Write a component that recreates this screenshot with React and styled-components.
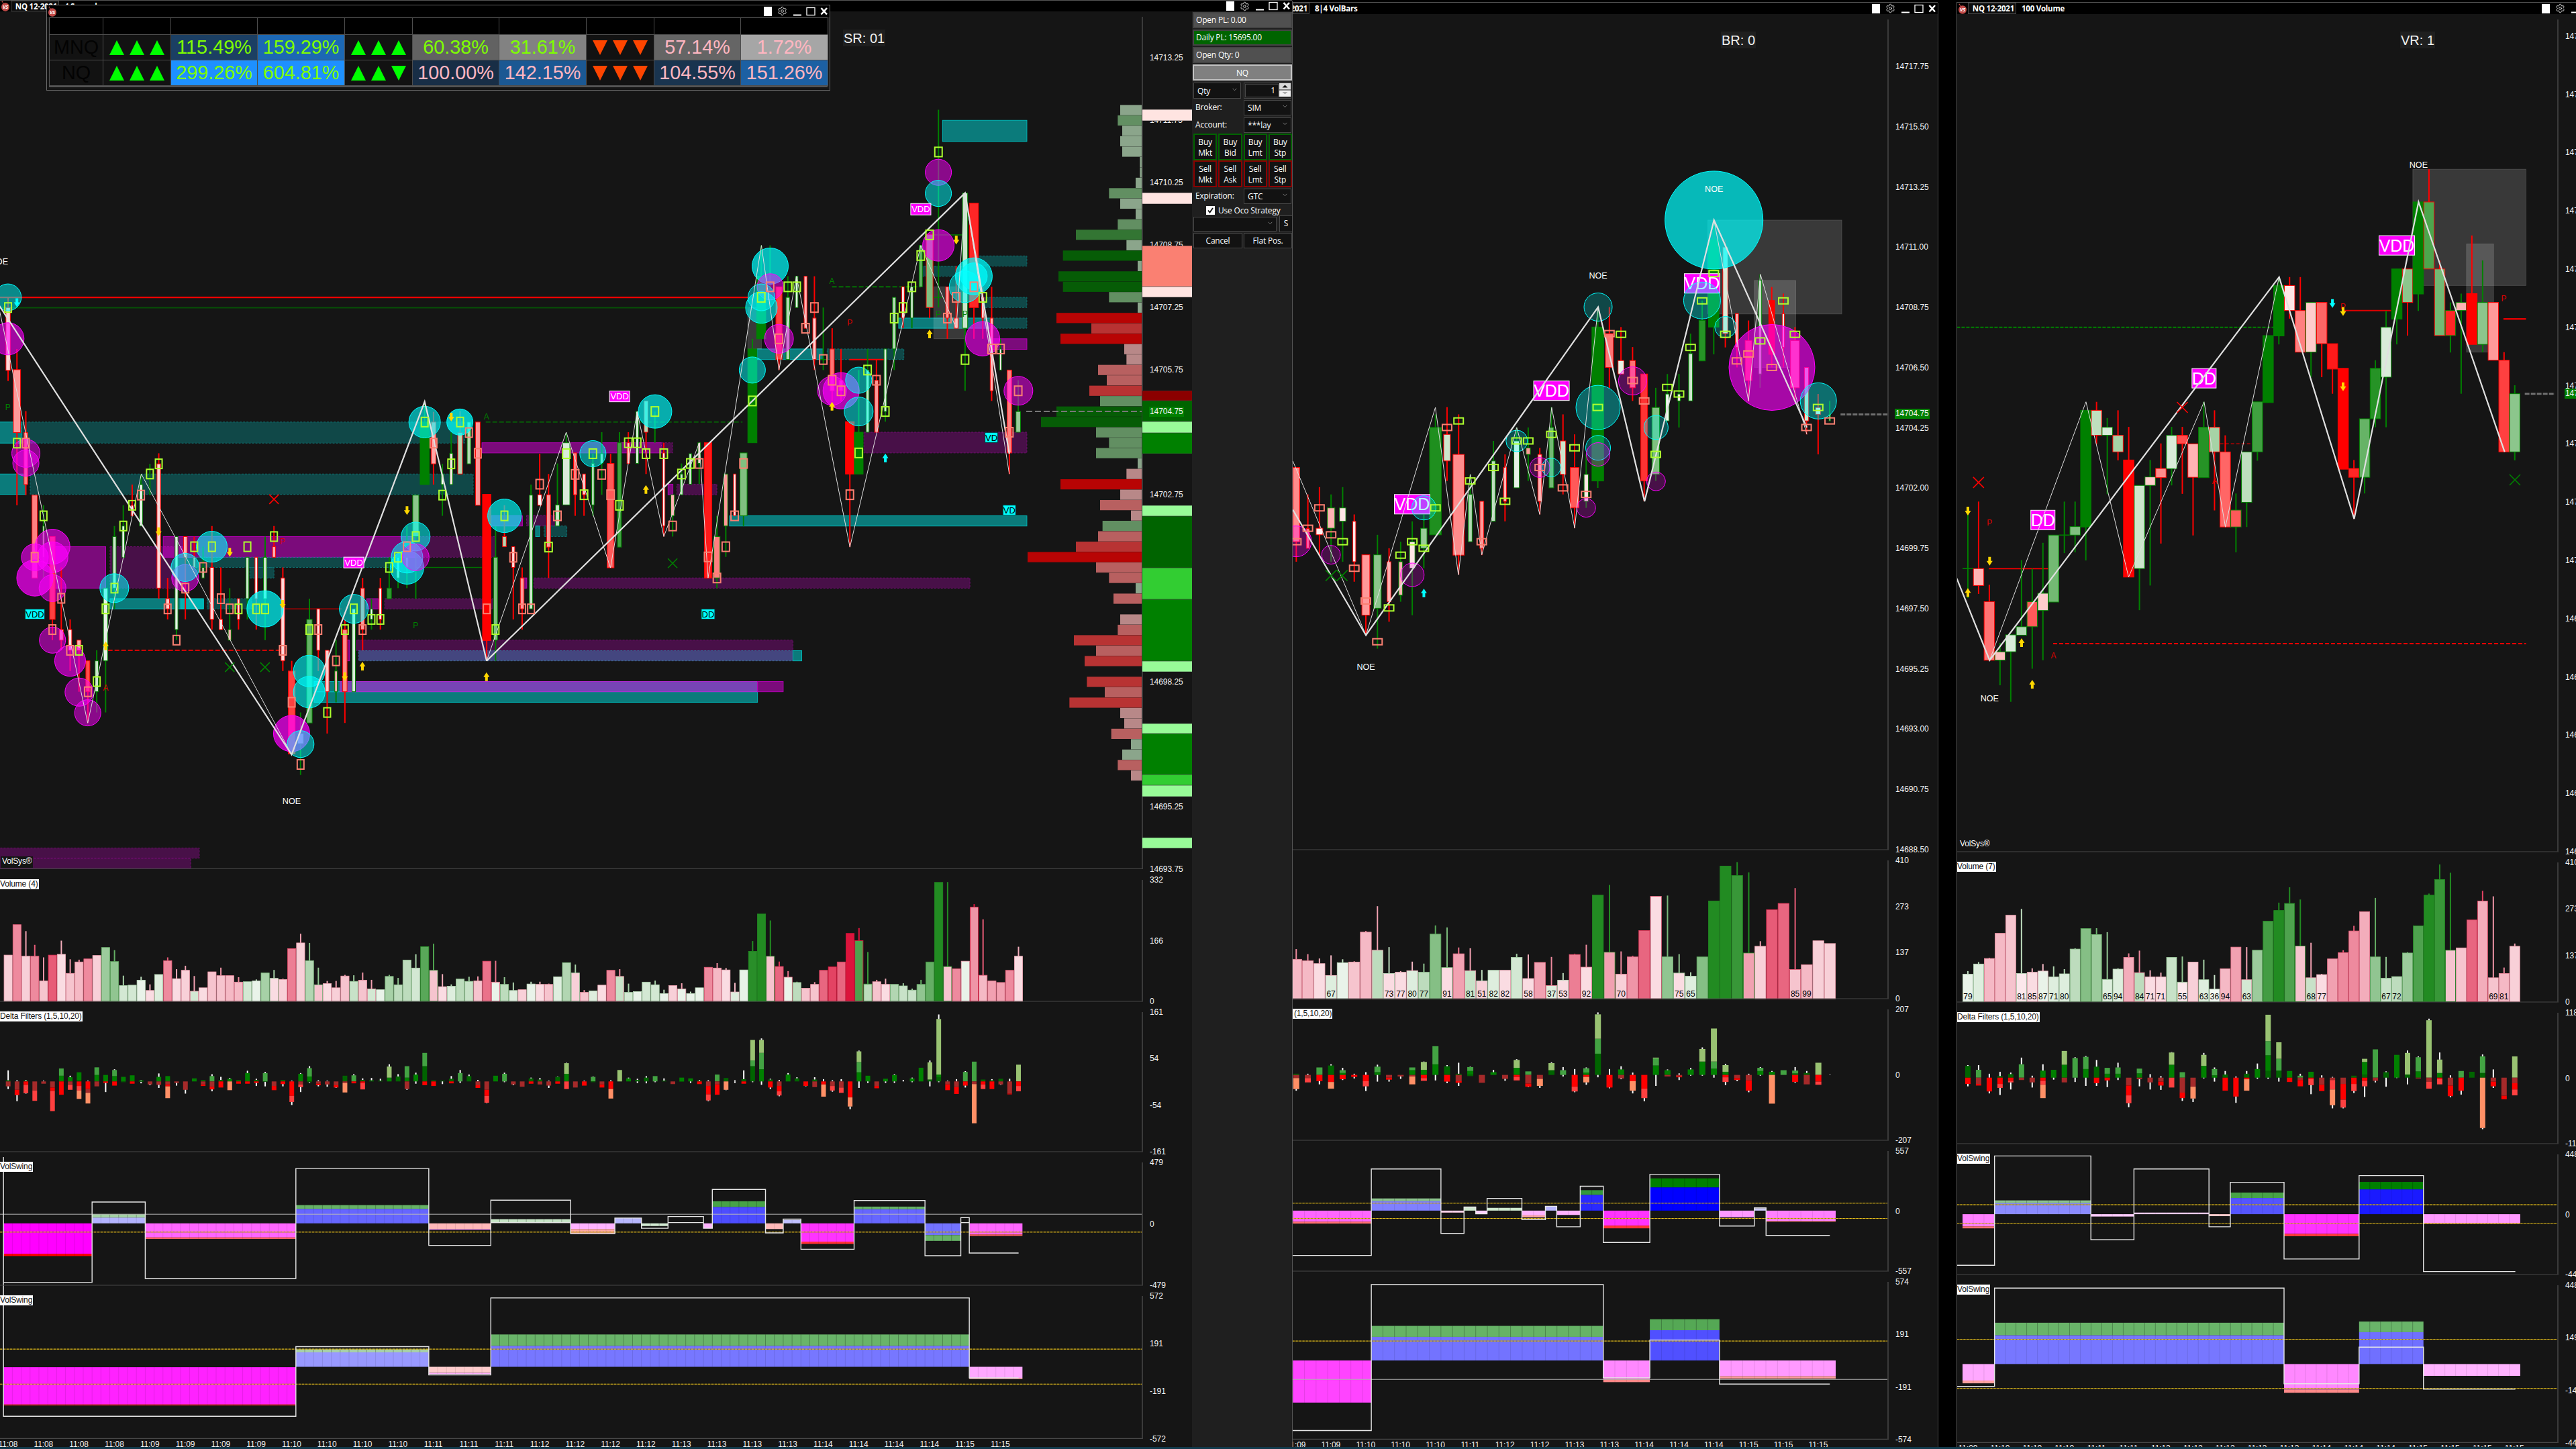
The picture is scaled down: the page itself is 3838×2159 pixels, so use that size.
import React from 'react';
import styled, { createGlobalStyle } from 'styled-components';
import { Settings } from 'lucide-react';

const GlobalStyle = createGlobalStyle`
  * { box-sizing: border-box; }
  body {
    margin: 0;
    background: #000;
    overflow: hidden;
    font-family: 'Liberation Sans', Arial, sans-serif;
  }
  svg { display: block; }
`;

/* ---------- helpers ---------- */

const HUES = { g: [0, 128, 0], r: [255, 0, 0], f: [34, 139, 34], c: [220, 20, 60] };

// "g7" = green, 70% of the way to white
const tone = (code, shift = 0) => {
  const base = HUES[code[0]];
  const t = Math.max(0, Math.min(10, parseFloat(code.slice(1)) - shift)) / 10;
  return `rgb(${base.map((v) => Math.round(v + (255 - v) * t)).join(',')})`;
};

const frame = (ox, oy, kx, ky) => ({
  kx,
  ky,
  x: (v) => ox + v / kx,
  y: (v) => oy + v / ky,
});

const rows = (text) =>
  text
    .trim()
    .split('\n')
    .map((l) => l.trim().split(' '));

const MARK = { g: '#adff2f', s: '#fa8072' };

/* ---------- price drawing ---------- */

const BAND = {
  t: { fill: 'rgba(0,255,255,.44)', stroke: '#00b4b4' },
  T: { fill: '#00b4b4', stroke: '#00e0e0' },
  td: { fill: 'rgba(0,255,255,.22)', stroke: '#0d7070', dash: '3 2' },
  p: { fill: 'rgba(255,0,255,.44)', stroke: '#b400b4' },
  pd: { fill: 'rgba(255,0,255,.22)', stroke: '#700d70', dash: '3 2' },
  b: { fill: '#44467f', stroke: '#3a6a94', dash: '3 2' },
  v: { fill: '#7744b4', stroke: '#b42bd8' },
  w: { fill: 'rgba(255,255,255,.155)', stroke: 'rgba(255,255,255,.14)' },
};

const Bands = ({ at, items }) =>
  items.map(([x1, y1, x2, y2, kind], i) => (
    <rect
      key={i}
      x={at.x(x1)}
      y={at.y(y1)}
      width={(x2 - x1) / at.kx}
      height={(y2 - y1) / at.ky}
      fill={BAND[kind].fill}
      stroke={BAND[kind].stroke}
      strokeDasharray={BAND[kind].dash}
    />
  ));

const Lines = ({ at, items }) =>
  items.map(([x1, x2, y, color, w, dash], i) => (
    <line
      key={i}
      x1={at.x(x1)}
      x2={at.x(x2)}
      y1={at.y(y)}
      y2={at.y(y)}
      stroke={color}
      strokeWidth={w || 1.5}
      strokeDasharray={dash}
    />
  ));

const Candles = ({ at, data, first, step }) =>
  data.map(([hi, top, bot, lo, w, wick, fill], i) => {
    const x = at.x(first + step * i);
    const color = wick === 'g' ? '#008000' : '#ff0000';
    return (
      <g key={i}>
        <line x1={x} x2={x} y1={at.y(+hi)} y2={at.y(+lo)} stroke={color} strokeWidth="2" />
        {+w > 0 && (
          <rect
            x={x - w / at.kx / 2 + 0.5}
            y={at.y(+top)}
            width={w / at.kx - 1}
            height={(bot - top) / at.ky}
            fill={tone(fill)}
            stroke={color}
          />
        )}
      </g>
    );
  });

const Marks = ({ at, data, first, step, w, h }) =>
  data.map((d, i) =>
    d[7] ? (
      <rect
        key={i}
        x={at.x(first + step * i) - w / 2}
        y={at.y(+d[7].slice(1)) - h / 2}
        width={w}
        height={h}
        fill="none"
        stroke={MARK[d[7][0]]}
        strokeWidth="2"
      />
    ) : null
  );

const Circles = ({ at, items }) =>
  items.map(([kind, x, y, r, o], i) => {
    const color = kind === 'c' ? '#00ffff' : '#ff00ff';
    return (
      <circle key={i} cx={at.x(x)} cy={at.y(y)} r={r} fill={color} fillOpacity={o} stroke={color} />
    );
  });

const Zigzag = ({ at, points, w }) => (
  <polyline
    points={points.map(([x, y]) => `${at.x(x)},${at.y(y)}`).join(' ')}
    fill="none"
    stroke="#e0e0e0"
    strokeWidth={w}
  />
);

const ARROW = {
  d: 'M-2 -6.5h4v6h2.5L0 6.5L-4.5 -.5h2.5z',
  u: 'M-2 6.5h4v-6h2.5L0 -6.5L-4.5 .5h2.5z',
};

const Arrows = ({ at, items }) =>
  items.map(([dir, x, y, color], i) => (
    <path
      key={i}
      d={ARROW[dir]}
      fill={color || '#ffd700'}
      transform={`translate(${at.x(x)} ${at.y(y)})`}
    />
  ));

const Crosses = ({ at, items }) =>
  items.map(([x, y, color, r = 7], i) => (
    <path
      key={i}
      d={`M${-r} ${-r}L${r} ${r}M${r} ${-r}L${-r} ${r}`}
      stroke={color}
      strokeWidth="1.6"
      transform={`translate(${at.x(x)} ${at.y(y)})`}
    />
  ));

const Words = ({ at, items }) =>
  items.map(([text, x, y, color, size = 12], i) => (
    <text
      key={i}
      x={at.x(x)}
      y={at.y(y) + size * 0.36}
      fontSize={size}
      fill={color}
      textAnchor="middle"
    >
      {text}
    </text>
  ));

const Tags = ({ at, items }) =>
  items.map(([text, x, y, w, h, size, alt], i) => (
    <g key={i}>
      <rect
        x={at.x(x) - w / 2}
        y={at.y(y) - h / 2}
        width={w}
        height={h}
        fill={alt ? '#00ffff' : '#ff00ff'}
        stroke={alt ? '#003c3c' : '#fff'}
      />
      <text
        x={at.x(x)}
        y={at.y(y) + size * 0.36}
        fontSize={size}
        fill={alt ? '#000' : '#fff'}
        textAnchor="middle"
      >
        {text}
      </text>
    </g>
  ));

/* ---------- indicator drawing ---------- */

// row: top wickTop fill [label] [wick tone]
const Volume = ({ at, data, first, step, base }) =>
  data.map(([top, wick, fill, label, wickFill], i) => {
    const x = at.x(first + step * i);
    const w = step / at.kx - 1;
    const edge = wickFill ? tone(wickFill) : tone(fill, 2);
    return (
      <g key={i}>
        {+wick > 0 && (
          <line x1={x} x2={x} y1={at.y(+wick)} y2={at.y(+top)} stroke={edge} strokeWidth="2" />
        )}
        <rect
          x={x - w / 2}
          y={at.y(+top)}
          width={w}
          height={(base - top) / at.ky}
          fill={tone(fill)}
          stroke={edge}
          strokeWidth=".8"
        />
        {label && label !== '-' && (
          <text x={x} y={at.y(base) - 4} fontSize="12" textAnchor="middle" fill="#000">
            {label}
          </text>
        )}
      </g>
    );
  });

const DELTA = {
  D: '#006400',
  G: '#008000',
  M: '#43a343',
  L: '#99c272',
  B: '#a52a2a',
  R: '#ff0000',
  T: '#ff4040',
  S: '#ff9066',
  W: '#ffffff',
};

// "G18M20W2/R12" : pieces stacked outward from zero, up part before the slash
const Delta = ({ at, series, first, step, zero, width }) =>
  series
    .trim()
    .split(/\s+/)
    .map((bar, i) => {
      const x = at.x(first + step * i);
      return (
        <g key={i}>
          {bar.split('/').map((side, s) => {
            let v = 0;
            return (side.match(/[A-Z][\d.]+/g) || []).map((piece, k) => {
              const h = parseFloat(piece.slice(1));
              const from = v;
              v += h;
              const w = piece[0] === 'W' ? 2 : width;
              return (
                <rect
                  key={k}
                  x={x - w / 2}
                  y={at.y(s ? zero + from : zero - v)}
                  width={w}
                  height={h / at.ky}
                  fill={DELTA[piece[0]]}
                />
              );
            });
          })}
        </g>
      );
    });

const isGreen = (hex) => parseInt(hex.slice(3, 5), 16) > parseInt(hex.slice(5, 7), 16) + 20;

const Swing = ({ at, bars, outline, levels, right, step, first }) => (
  <>
    {bars.map(([x1, x2, y1, y2, fill], i) => {
      const cuts = [];
      for (let x = x1 + step; x < x2 - 4; x += step) cuts.push(x);
      return (
        <g key={i}>
          <rect
            x={at.x(x1)}
            y={at.y(y1)}
            width={(x2 - x1) / at.kx}
            height={(y2 - y1) / at.ky}
            fill={fill}
          />
          {cuts.map((x) => (
            <line
              key={x}
              x1={at.x(x)}
              x2={at.x(x)}
              y1={at.y(y1)}
              y2={at.y(y2)}
              stroke="#000"
              strokeOpacity={isGreen(fill) ? 0.26 : 0.1}
            />
          ))}
        </g>
      );
    })}
    {levels.map(([y, color]) => (
      <g key={y}>
        <line x1={at.x(first)} x2={right} y1={at.y(y)} y2={at.y(y)} stroke={color || '#8a7410'} />
        {!color && (
          <line
            x1={at.x(first)}
            x2={right}
            y1={at.y(y)}
            y2={at.y(y)}
            stroke="#e8c020"
            strokeDasharray="3 2"
          />
        )}
      </g>
    ))}
    {outline.map((line, i) => (
      <polyline
        key={i}
        points={rows(line)[0]
          .map((p) => p.split(','))
          .map(([x, y]) => `${at.x(+x)},${at.y(+y)}`)
          .join(' ')}
        fill="none"
        stroke="#e6e6e6"
        strokeWidth="1.4"
      />
    ))}
  </>
);

/* ---------- window parts ---------- */

const Workspace = styled.div`
  position: relative;
  width: 3838px;
  height: 2159px;
  background: #000;
  overflow: hidden;
  display: flex;
  align-items: flex-start;
`;

const Window = styled.section`
  width: ${(p) => p.$width}px;
  margin-top: ${(p) => p.$top}px;
  margin-right: ${(p) => p.$gap || 0}px;
  height: ${(p) => 2159 - p.$top}px;
  flex: none;
  background: #151515;
  border-right: 1px solid #4a4a4a;
  display: flex;
  flex-direction: column;
  overflow: hidden;
  box-shadow: -1px -1px 0 #555;
`;

const Bar = styled.header`
  height: ${(p) => p.$height}px;
  flex: none;
  background: #000;
  display: flex;
  align-items: center;
  color: #fff;
  font: bold 11.5px 'Open Sans', 'Noto Sans', sans-serif;
  letter-spacing: -0.25px;
  white-space: nowrap;
`;

const Instrument = styled.span`
  height: 100%;
  width: ${(p) => p.$width || 72}px;
  margin-right: 8px;
  padding: 0 2px;
  border: 1px solid #4a4a4a;
  background: #0c0c0c;
  display: flex;
  align-items: center;
  justify-content: flex-end;
  overflow: hidden;
  flex: none;
`;

const WindowButtons = styled.div`
  margin-left: auto;
  padding-right: 1px;
  display: flex;
  align-items: center;
  flex: none;
`;

const Swatch = styled.i`
  width: 12px;
  height: 14px;
  margin-right: 8px;
  background: #fff;
`;

const Logo = () => (
  <svg width="16" height="16" viewBox="0 0 16 16">
    <path d="M3 1l2 3" stroke="#c9504c" strokeWidth="1.6" strokeDasharray="1.5 1" />
    <ellipse cx="8" cy="9.5" rx="6" ry="6.2" fill="#c24a48" />
    <text x="8" y="12.4" fontSize="7.5" fontStyle="italic" fontWeight="bold" fill="#fff" textAnchor="middle">
      VS
    </text>
  </svg>
);

const Buttons = () => (
  <WindowButtons>
    <Swatch />
    <Settings size={15} color="#ddd" strokeWidth={1.6} />
    <svg width="62" height="16" viewBox="0 0 62 16">
      <path d="M9 13.5h12" stroke="#fff" strokeWidth="2" />
      <rect x="29" y="2.5" width="12" height="11" fill="none" stroke="#fff" strokeWidth="1.3" />
      <path d="M50.5 3l8.500 9.500M59 3l-8.500 9.500" stroke="#fff" strokeWidth="2.6" />
    </svg>
  </WindowButtons>
);

const Body = styled.div`
  flex: 1;
  min-height: 0;
  display: flex;
`;

const Chart = styled.div`
  flex: 1;
  min-width: 0;
  display: flex;
  flex-direction: column;
`;

const PaneRow = styled.div`
  position: relative;
  height: ${(p) => p.$height}px;
  flex: none;
  display: flex;
`;

const Scale = styled.div`
  position: relative;
  flex: 1;
  margin-bottom: ${(p) => (p.$last ? -8 : 0)}px;
  padding-left: 10px;
  display: flex;
  flex-direction: column;
  justify-content: space-between;
  color: #f4f4f4;
  font-size: 12px;
  line-height: 16px;
  white-space: nowrap;
  letter-spacing: -0.05px;
`;

const PriceScale = styled(Scale)`
  justify-content: flex-start;
  padding: 0;
`;

const Price = styled.div`
  height: ${(p) => p.$step}px;
  margin-top: ${(p) => p.$offset || 0}px;
  padding-left: 10px;
  flex: none;
  display: flex;
  align-items: center;
`;

const PriceBlock = styled.div`
  position: absolute;
  left: -1px;
  right: 0;
  top: ${(p) => p.$top}px;
  height: ${(p) => p.$height}px;
  background: ${(p) => p.$color};
  border: 1px solid rgba(60, 60, 60, 0.35);
  border-width: 1px 0;
`;

const LastPrice = styled.div`
  position: absolute;
  left: 9px;
  top: ${(p) => p.$top}px;
  padding: 0 1px;
  line-height: 15px;
  background: #008000;
`;

const PaneName = styled.div`
  position: absolute;
  left: 0;
  top: 7px;
  height: 15px;
  padding: 0 1px ${(p) => (p.$indent ? '0 2px' : '0 0')};
  background: #fff;
  color: #111;
  font-size: 12px;
  line-height: 15px;
  letter-spacing: -0.15px;
  white-space: nowrap;
`;

const Brand = styled(PaneName)`
  left: ${(p) => p.$left}px;
  top: auto;
  bottom: 10px;
  height: 17px;
  padding: 0 2px;
  background: #151515;
  color: #fff;
`;

const Ratio = styled.div`
  position: absolute;
  left: ${(p) => p.$left}px;
  top: ${(p) => p.$top}px;
  height: 25px;
  padding: 0 1px;
  background: #1f1f1f;
  color: #f0f0f0;
  font-size: 20px;
  line-height: 26px;
  white-space: nowrap;
`;

const TimeAxis = styled.div`
  height: 15px;
  flex: none;
  margin-left: ${(p) => p.$start}px;
  display: flex;
  color: #f4f4f4;
  font-size: 12px;
  line-height: 16px;
  letter-spacing: -0.1px;
`;

const Tick = styled.span`
  width: ${(p) => p.$step}px;
  flex: none;
  text-align: center;
`;

const Times = ({ start, step, labels }) => (
  <TimeAxis $start={start - step / 2}>
    {labels.split(' ').map((t, i) => (
      <Tick key={i} $step={step}>{`11:${t}`}</Tick>
    ))}
  </TimeAxis>
);

const Plot = ({ x, y, w, h, sep, axisTop, children }) => (
  <svg width={w} height={h} viewBox={`${x} ${y} ${w} ${h}`} style={{ flex: 'none' }}>
    {children}
    <line x1={x} x2={x + w} y1={sep} y2={sep} stroke="#484848" strokeWidth="1.2" />
    <line x1={x + w - 1} x2={x + w - 1} y1={axisTop} y2={sep} stroke="#3a3a3a" strokeWidth="2" />
  </svg>
);

const IndicatorPane = ({ x, w, top, bottom, last, name, indent, scale, children }) => (
  <PaneRow $height={bottom - top}>
    <Plot x={x} y={top} w={w} h={bottom - top} sep={last ? bottom - 0.6 : bottom - 8} axisTop={top + 8}>
      {children}
    </Plot>
    <Scale $last={last}>
      {scale.map((s) => (
        <span key={s}>{s}</span>
      ))}
    </Scale>
    {name && <PaneName $indent={indent}>{name}</PaneName>}
  </PaneRow>
);

const priceList = (from, delta, count) =>
  Array.from({ length: count }, (_, i) => (from - delta * i).toFixed(2));

/* ---------- trend table ---------- */

const TableWindow = styled.div`
  position: absolute;
  left: 69px;
  top: 7px;
  width: 1168px;
  height: 128px;
  padding: 0 3px 0 3px;
  background: #151515;
  border: 1px solid #6a6a6a;
`;

const TableBar = styled(Bar)`
  margin: 0 -3px 1px;
`;

const TableGrid = styled.div`
  display: grid;
  grid-template-columns: 80px 101px 129px 130px 101px 129px 130px 101px 129px 130px;
  grid-template-rows: 25px 38px 38px;
  border: 1px solid #555;
  border-width: 1px 0 2px 1px;
`;

const TableCell = styled.div`
  border: 1px solid #4d4d4d;
  border-width: 0 1px 1px 0;
  background: ${(p) => p.$bg || '#121212'};
  color: ${(p) => p.$color || '#030303'};
  font-size: 28.8px;
  line-height: 1;
  display: flex;
  gap: 8px;
  align-items: center;
  justify-content: center;
`;

const Triangles = ({ dirs, color }) =>
  dirs.split('').map((d, i) => (
    <svg key={i} width="22" height="22" viewBox="0 0 22 22">
      <path d={d === 'u' ? 'M11 0L22 22H0z' : 'M11 22L22 0H0z'} fill={color} />
    </svg>
  ));

const LIME = '#7fff00';
const PINK = '#ffb6c1';

const TREND = [
  ['MNQ', 'uuu', ['115.49%', '#1b3f63'], ['159.29%', '#1c68b4'], 'uuu', ['60.38%', '#626262'], ['31.61%', '#828282'], 'ddd', ['57.14%', '#656565'], ['1.72%', '#a6a6a6']],
  ['NQ', 'uuu', ['299.26%', '#1e90ff'], ['604.81%', '#1e90ff'], 'uud', ['100.00%', '#182e46'], ['142.15%', '#1b5893'], 'ddd', ['104.55%', '#19344f'], ['151.26%', '#1c60a3']],
];

const PINK_CELLS = [[8, 9], [5, 6, 8, 9]];

const TrendTable = () => (
  <TableWindow>
    <TableBar $height={17}>
      <Logo />
      <Buttons />
    </TableBar>
    <TableGrid>
      {Array.from({ length: 10 }, (_, i) => (
        <TableCell key={i} $bg="#000" />
      ))}
      {TREND.map((row, r) =>
        row.map((cell, i) => {
          if (Array.isArray(cell)) {
            return (
              <TableCell key={i} $bg={cell[1]} $color={PINK_CELLS[r].includes(i) ? PINK : LIME}>
                {cell[0]}
              </TableCell>
            );
          }
          return (
            <TableCell key={i}>
              {i === 0 ? cell : <Triangles dirs={cell} color={i === 7 ? '#ff4500' : '#00ff00'} />}
            </TableCell>
          );
        })
      )}
    </TableGrid>
  </TableWindow>
);

/* ---------- order panel ---------- */

const Panel = styled.aside`
  width: 149px;
  flex: none;
  padding: 1px 0 0 1px;
  background: #1f1f1f;
  color: #fff;
  font: 12px 'Open Sans', 'Noto Sans', sans-serif;
  letter-spacing: -0.2px;
  display: flex;
  flex-direction: column;
`;

const Readout = styled.div`
  height: 24px;
  margin-bottom: 2px;
  padding: 0 3px;
  border: 2px solid #444;
  background: ${(p) => p.$bg || '#505050'};
  line-height: 20px;
`;

const SymbolButton = styled.div`
  height: 24px;
  margin-bottom: 3px;
  border: 2px solid #c4c4c4;
  background: #808080;
  line-height: 21px;
  text-align: center;
`;

const Field = styled.div`
  height: 22px;
  margin: 0 1px 4px;
  display: grid;
  grid-template-columns: ${(p) => p.$cols || '71px 71px'};
  column-gap: 4px;
  line-height: 22px;
`;

const FieldLabel = styled.span`
  padding-left: 3px;
`;

const Select = styled.div`
  border: 1px solid #484848;
  background: #121212;
  padding: 0 5px;
  line-height: 21px;
  display: flex;
  justify-content: space-between;
  align-items: center;
`;

const Spinner = styled.div`
  border: 1px solid #484848;
  display: grid;
  grid-template-columns: 1fr 17px;
  gap: 1px;
  text-align: right;
`;

const SpinnerValue = styled.div`
  margin: 1px 0 1px 1px;
  border: 1px solid #484848;
  background: #121212;
  padding-right: 4px;
  line-height: 18px;
`;

const ButtonGrid = styled.div`
  margin: -2px 0 0 1px;
  display: grid;
  grid-template-columns: repeat(4, 1fr);
  column-gap: 2px;
`;

const OrderButton = styled.div`
  height: 40px;
  padding-top: 3px;
  border: 2px solid ${(p) => (p.$side === 'Buy' ? '#006400' : '#8b0000')};
  background: #121212;
  line-height: 16px;
  text-align: center;
`;

const ExpirationField = styled(Field)`
  margin: 2px 1px;
`;

const StrategyField = styled(Field)`
  margin-bottom: 2px;
`;

const ActionField = styled(Field)`
  margin-right: 0;
  column-gap: 2px;
`;

const Check = styled.div`
  height: 16px;
  margin: 0 0 2px 20px;
  display: flex;
  align-items: center;
  gap: 5px;
`;

const PlainButton = styled.div`
  border: 1px solid #484848;
  background: #121212;
  line-height: 21px;
  text-align: center;
`;

const StrategyButton = styled(PlainButton)`
  margin: -2px 0 -1px;
`;

const ChevronIcon = styled.svg`
  margin-top: -4px;
`;

const Chevron = () => (
  <ChevronIcon width="7" height="5" viewBox="0 0 7 5">
    <path d="M.7 .8L3.500 3.800L6.300 .8" fill="none" stroke="#777" />
  </ChevronIcon>
);

const OrderPanel = () => (
  <Panel>
    <Readout>Open PL: 0.00</Readout>
    <Readout $bg="#006400">Daily PL: 15695.00</Readout>
    <Readout>Open Qty: 0</Readout>
    <SymbolButton>NQ</SymbolButton>
    <Field>
      <Select>
        Qty <Chevron />
      </Select>
      <Spinner>
        <SpinnerValue>1</SpinnerValue>
        <svg width="17" height="20" viewBox="0 0 17 20">
          <rect width="17" height="9.500" fill="#d8d8d8" />
          <rect y="10.500" width="17" height="9.500" fill="#f0f0f0" />
          <path d="M4.500 6.500L8.500 2.500L12.500 6.500z" fill="#111" />
          <path d="M4.500 13L8.500 16.500L12.500 13z" fill="#aaa" />
        </svg>
      </Spinner>
    </Field>
    <Field>
      <FieldLabel>Broker:</FieldLabel>
      <Select>
        SIM <Chevron />
      </Select>
    </Field>
    <Field>
      <FieldLabel>Account:</FieldLabel>
      <Select>
        ***lay <Chevron />
      </Select>
    </Field>
    <ButtonGrid>
      {['Mkt', 'Bid', 'Lmt', 'Stp'].map((k) => (
        <OrderButton key={k} $side="Buy">
          Buy
          <br />
          {k}
        </OrderButton>
      ))}
      {['Mkt', 'Ask', 'Lmt', 'Stp'].map((k) => (
        <OrderButton key={k} $side="Sell">
          Sell
          <br />
          {k}
        </OrderButton>
      ))}
    </ButtonGrid>
    <ExpirationField>
      <FieldLabel>Expiration:</FieldLabel>
      <Select>
        GTC <Chevron />
      </Select>
    </ExpirationField>
    <Check>
      <svg width="13" height="13" viewBox="0 0 13 13">
        <rect width="13" height="13" fill="#fff" />
        <path d="M3 6.500L5.500 9.500L10 3" fill="none" stroke="#111" strokeWidth="1.8" />
      </svg>
      Use Oco Strategy
    </Check>
    <StrategyField $cols="124px 20px">
      <Select>
        <span /> <Chevron />
      </Select>
      <StrategyButton>S</StrategyButton>
    </StrategyField>
    <ActionField $cols="73px 72px">
      <PlainButton>Cancel</PlainButton>
      <PlainButton>Flat Pos.</PlainButton>
    </ActionField>
  </Panel>
);

/* ---------- chart 1 data ---------- */

const A = frame(0, 360, 1.8667, 1.7818);
const B = frame(800, 140, 2.0632, 1.7818);
const C = frame(0, 1270, 1.7422, 1.7638);

// high top bottom low width wick fill mark
const EARLY = rows(`
148 175 342 370 14 r r8.5 g175
285 340 507 700 22 r r6 g535
450 507 645 673 12 r r5 s535
673 673 893 893 17 r r5 s838
700 755 838 893 6 g r9 g728
783 783 1003 1058 17 r r2.5 s1030
865 1030 1058 1085 13 r r7 s947
1003 1030 1085 1140 11 r r9 s1085
1058 1058 1085 1195 13 r r7 g1085
1113 1113 1195 1278 13 r r3 s1195
1085 1113 1195 1250 11 g g8 g1168
920 920 1113 1250 14 g g9 g975
755 783 920 975 11 g g8 g920
700 755 838 838 9 g g9 g755
645 700 728 728 8 r r9 g700
617 645 755 755 10 g g9.5 s673
590 0 0 673 0 g g0 g617
562 590 920 948 12 r r8.5 g590
893 948 975 1003 12 r r8 s975
783 783 1030 1058 10 g g9 s1058
783 783 838 1003 12 r r7 s920
783 838 865 865 7 r g8 g810
810 865 893 893 8 g r8 s865
755 865 1003 1030 12 r r8.5 g810
865 1003 1030 1030 11 r r9 s948
920 1030 1058 1058 10 g r7 s975
948 948 1003 1030 8 r r9 g975
838 838 948 1003 10 g g8 g810
838 838 948 1030 9 r r9.5 g975
783 838 948 1058 11 g g8 g975
755 810 838 838 10 r r7 g783
865 893 1113 1140 12 r r8.5 s1085
1113 1140 1360 1360 21 r r2.5 s1223
1250 1306 1333 1416 18 g g9 s1388
948 1003 1278 1278 17 g g4 g1030
975 975 1085 1140 10 r r9 s1030
1085 1085 1195 1306 12 r r8 g1250
1058 1140 1195 1223 9 g r7 s1113
1003 1030 1195 1278 14 r r5.5 g1030
975 975 1195 1195 11 g g8.5 g975
893 920 1030 1085 12 r r6 s1030
948 975 1003 1030 8 g g9.5 g1003
893 920 1003 1030 9 r r9.5 g1003
838 920 948 948 14 g g2 g865
838 838 893 920 9 g g8 g838
755 838 865 920 9 g g8 s810
673 673 783 948 19 g g5.5 g783
425 479 645 645 27 g g0 g479
452 479 590 645 15 r r6.5 s535
590 617 645 728 9 g g9.5 g673
507 562 645 645 10 g r9 g590
450 507 617 617 15 r g7 g479
479 479 590 590 12 g g7 s507
479 479 700 700 15 r r6 s562
671 671 1059 1113 25 r r0 s975
755 838 1058 1113 13 g g5 g1030
700 783 810 810 12 r g7 g728
810 810 865 1003 10 r r8.5 s838
865 893 975 1030 12 r r6 s975
645 673 975 975 11 g g8 s975
`);

const LATE = rows(`
955 1064 1092 1092 14 r r9.5 s1036
1009 1064 1203 1285 14 r r6 g1203
981 1091 1147 1147 14 g g8 s1120
900 926 1091 1091 24 g g8.5 g955
953 953 1064 1120 12 r r5 s1010
1009 1009 1064 1120 11 r r8 g1064
955 981 1091 1120 10 g g7 g955
898 955 981 1064 11 g g7 s1010
955 981 1258 1258 23 r r3.5 s1064
898 926 1203 1203 14 g g2.5 g1092
898 926 981 981 10 r r8 g926
843 843 981 981 10 g g9 g926
815 815 898 1009 14 r g7 g955
843 0 0 926 0 g g0 g843
926 953 1147 1175 9 r r9.5 g955
1064 1064 1120 1175 13 g r7 s1147
981 1009 1064 1064 10 g g8 g1009
955 955 1036 1036 10 g g8 g981
926 926 981 1036 10 g r8.5 s981
926 926 1285 1285 25 r r1 s1229
1120 1175 1285 1312 21 g r5 s1285
1009 1009 1147 1229 14 g r6 s1202
1009 1009 1120 1120 9 r r9.5 s1120
953 953 1120 1147 24 g g5 s981
650 677 926 926 30 g g0 g815
402 484 650 650 30 g g0 g540
402 0 0 520 0 g g0 s512
512 512 705 733 21 r r2.5 s650
484 540 705 705 13 g g7 g512
484 484 567 567 10 g g9 g512
484 484 622 622 11 r r7 s622
484 595 705 733 12 r r8 s567
567 0 0 733 0 g g0 s705
622 677 788 815 15 r r4.5 s760
677 760 788 815 14 r r5 s788
870 870 1009 1203 29 r r0 s1064
733 898 1009 1009 29 g g0 g953
677 733 898 898 11 g g8 g733
705 760 898 898 13 r r6 s760
677 677 843 870 10 g g8.5 g843
540 540 677 733 12 g g7 g595
512 512 595 622 10 r r9 g567
512 512 595 622 9 g g9 g512
402 402 512 512 12 g g4 g429
373 373 567 595 23 r g5 g374
42 0 0 567 0 g g0 g154
512 512 595 650 12 r r6 s595
457 595 622 622 15 r r7 s540
263 263 622 788 18 g g8 g705
290 290 567 650 30 r r1.5 s512
512 540 595 650 10 r r8 g540
512 595 788 815 11 r r7 s677
650 677 733 733 8 g r9.5 s677
733 733 953 1009 16 r r5 s898
760 843 898 898 16 g g6 s788
`);

const BANDS_A = [
  [-4, 479, 60, 535, 't'], [60, 479, 1292, 535, 'td'], [-4, 617, 72, 671, 't'], [84, 617, 1316, 671, 'td'],
  [146, 810, 294, 920, 'p'], [306, 810, 515, 920, 'pd'], [454, 783, 1156, 838, 'p'], [1156, 783, 1378, 838, 'pd'],
  [306, 948, 503, 975, 't'], [503, 948, 566, 975, 'T'], [576, 948, 700, 975, 'td'], [540, 838, 1095, 865, 'td'],
  [695, 865, 762, 893, 'td'], [1366, 728, 1453, 755, 'p'], [1452, 893, 1465, 920, 'p'],
  [960, 1058, 972, 1113, 'p'], [1020, 948, 1052, 975, 'p'], [1070, 948, 1378, 975, 'pd'],
];

const BANDS_B = [
  [-169, 926, 383, 953, 'p'], [383, 926, 417, 953, 'pd'], [-32, 1119, 62, 1147, 'pd'], [-4, 1147, 8, 1175, 't'],
  [22, 1147, 92, 1175, 'td'], [-9, 1285, 1331, 1312, 'pd'], [-562, 1450, 787, 1478, 'pd'],
  [-548, 1478, 787, 1505, 'b'], [787, 1478, 814, 1505, 't'], [-685, 1560, -605, 1587, 't'],
  [-685, 1587, 678, 1615, 't'], [-605, 1560, 678, 1587, 'v'], [678, 1560, 757, 1587, 'p'],
  [1247, 70, 1506, 126, 't'], [1350, 430, 1506, 457, 'td'], [1180, 457, 1350, 484, 'td'],
  [1370, 540, 1506, 567, 'td'], [1112, 595, 1400, 622, 't'], [1400, 595, 1506, 622, 'td'],
  [1400, 650, 1506, 678, 'p'], [1005, 898, 1506, 953, 'pd'], [677, 677, 880, 705, 't'],
  [892, 677, 1128, 705, 'td'], [403, 1036, 418, 1064, 'p'], [430, 1036, 553, 1064, 'pd'],
  [592, 1120, 1506, 1147, 't'], [648, 567, 690, 677, 'w'], [1220, 512, 1317, 650, 'w'],
  [-1660, 2002, -1038, 2029, 'pd'], [-1660, 2029, -1064, 2057, 'pd'],
];

const CIRCLES_A = [
  ['c', 22, 148, 20, 0.5], ['m', 22, 258, 24, 0.6], ['m', 72, 562, 21, 0.5], ['m', 72, 588, 19.5, 0.5],
  ['m', 97, 893, 27, 0.7], ['m', 97, 838, 20, 0.6], ['m', 146, 810, 26, 0.6], ['m', 146, 838, 23, 0.6],
  ['m', 146, 920, 20, 0.5], ['m', 146, 1058, 19.5, 0.5], ['m', 195, 1113, 23, 0.6], ['m', 220, 1196, 21, 0.5],
  ['m', 244, 1251, 19.5, 0.5], ['c', 318, 920, 21.5, 0.55], ['m', 515, 893, 20, 0.5], ['c', 515, 865, 21, 0.55],
  ['c', 589, 810, 23, 0.6], ['c', 737, 975, 27, 0.7], ['m', 811, 1306, 27, 0.7], ['c', 836, 1334, 20, 0.5],
  ['c', 860, 1140, 23.5, 0.6], ['c', 860, 1196, 23.5, 0.6], ['c', 984, 975, 21.5, 0.5], ['c', 1132, 838, 23.5, 0.55],
  ['c', 1132, 865, 25, 0.65], ['c', 1156, 783, 21.5, 0.55], ['m', 1156, 838, 20, 0.45], ['c', 1181, 479, 23.5, 0.6],
  ['c', 1279, 479, 19.5, 0.75], ['c', 1403, 728, 25, 0.65],
];

const CIRCLES_B = [
  ['c', 717, 457, 27, 0.7], ['m', 717, 512, 19.5, 0.5], ['c', 690, 540, 20, 0.45], ['c', 690, 567, 23.5, 0.6],
  ['m', 744, 650, 21.5, 0.5], ['c', 662, 733, 19.5, 0.5], ['c', 172, 955, 19.5, 0.5], ['c', 363, 843, 25, 0.65],
  ['m', 907, 788, 21.5, 0.5], ['m', 935, 788, 27, 0.65], ['c', 989, 760, 19.5, 0.5], ['c', 989, 843, 21.5, 0.5],
  ['m', 1234, 208, 19.5, 0.5], ['c', 1234, 264, 19.5, 0.5], ['m', 1234, 402, 23.5, 0.6], ['c', 1316, 512, 23.5, 0.5],
  ['c', 1343, 484, 27.5, 0.7], ['c', 1343, 484, 20, 0.7], ['m', 1370, 650, 25.5, 0.6], ['m', 1480, 788, 21.5, 0.5],
];

const THIN_B = [
  [-154.7, 1505], [90, 898], [226, 1258], [308, 843], [390, 1175], [499, 926], [526, 1285], [690, 402], [744, 733],
  [798, 484], [962, 1203], [1180, 402], [1289, 622], [1316, 263], [1452, 1009],
];

const PROFILE_COLORS = {
  a: '#8ba58b', b: '#628f62', c: '#337533', d: '#065c06',
  e: '#b88888', f: '#b86060', g: '#b83333', h: '#b80404',
};

const PROFILE =
  '807a 796b 816a 807a 816a 895a 895a 876a 757b 807a 876a 796b 609c 835a 551d 885a 531d 551d 757b 885a 522h 678g 540h 825e 835e 708f 747f 669g 717b 522d 453d 699b 757b 699b 885a 835e 540h 807e 717f 855e 728b 708f 609g 393h 699f 757f 876a 777f 906a 807e 796f 600g 699f 648g 906a 658g 738f 580g 807e 825e 767f 855a 816a 796f 855e';

const Profile = () =>
  PROFILE.split(' ').map((row, i) => {
    const w = (906 - parseFloat(row)) / 3;
    return (
      <rect
        key={i}
        x={1702 - w}
        y={156.4 + i * 15.49}
        width={w}
        height="15.2"
        fill={PROFILE_COLORS[row.slice(-1)]}
      />
    );
  });

const BLOCKS = [
  [162.9, 180, '#ffe4e1'], [287, 304, '#ffe4e1'], [366, 427, '#fa8072'], [427, 443, '#ffe4e1'],
  [581.6, 597, '#8b0000'], [597, 628, '#006400'], [628, 644.5, '#98fb98'], [644.5, 675.5, '#008000'],
  [753, 768.6, '#98fb98'], [768.6, 846, '#006400'], [846, 892.6, '#32cd32'], [892.6, 985, '#008000'],
  [985, 1001, '#98fb98'], [1078, 1093.4, '#98fb98'], [1093.4, 1153.8, '#008000'], [1153.8, 1170, '#32cd32'],
  [1170, 1186.5, '#98fb98'], [1247.7, 1264, '#98fb98'],
];

const VOL1 = rows(`
270 0 c8
190 0 c5
273 207 c8
273 243 c5
338 276 c7.5
270 0 c3
268 232 c8.5
318 281 c7.5
288 282 c7
280 0 c5
271 0 c8
250 0 f5.5
287 257 f5
350 324 f8
349 0 f8
336 327 f9
363 347 c8.5
321 0 f8.5
285 276 c5
332 307 c8.5
310 298 c8
365 325 f8 - c6
356 0 c8.5
314 0 c7.5
324 303 c7.5
324 0 c7
341 328 c7
340 0 f8
338 334 f9
317 0 f6
331 309 c8.5 - f6
334 332 c8
253 0 c4.5
238 214 c8
285 238 f6.5
348 303 c7.5 - f5
345 338 c8.5
356 338 c8
325 322 c7.5
339 323 f7.5
336 316 c7.5
359 335 f8 - c6
361 0 f9
326 322 f6
348 330 f7
283 0 f7
304 268 f8
248 0 f2.5
310 240 c7.5 - f2
353 320 c8.5
352 347 f8.5
333 0 f7
339 327 f7.5
338 326 c7.5
286 0 c4
341 285 f9 - c4
347 328 f7
363 342 f8.5
361 0 c8
346 340 f9
347 340 c8.5
347 345 c7.5
327 0 f8.5
290 0 f6.5
317 295 c8 - f6
368 362 c7.5
364 0 f8.5
349 0 c8.5
310 0 c5
326 307 f7.5 - c5
368 345 f8
366 0 f9
341 0 f8
348 337 f8
371 361 f9
350 0 c8
359 344 f9 - c6
371 366 f9
356 0 f9
302 0 c5
304 291 c7
309 304 c8.5
367 343 f8.5 - c7
309 0 f9
260 233 f0.3
162 0 f0
273 179 c7.5 - f0
300 287 c3.5
328 312 f9 - c4
342 340 f7
357 0 c7.5
347 341 c7.5
310 0 c3.5
301 0 c2
288 0 c3.5
213 0 c0
232 199 f2 - c0
346 262 f7 - f1
340 335 c7.5
347 332 c8.5
347 0 f6.5
351 344 f7.5
362 358 f7.5
347 335 f5
288 0 f3
79 0 f0
300 78 c7.5 - f0
306 0 c5
286 0 f9 - c6
144 136 c5.5 - c0
323 176 c7 - c3
338 0 c6
342 0 c6
310 0 c5
273 248 c8.5
`);

const DELTA1 = `
D3W26/B13W7 W3/B22R14W16 D2W2/R9T22W1 /B24T27 W2/B6 /B16R9T53 G15M19/R35 G11W4/B9T13 D4G20/R12T12S22 W2/R20B10S28
G17M20/B13 G17/R4W24 G14M16W2/R11 G12/D2 G16/R6 D3W1/D1W4 /B8W2 G12W9/B9W8 G14/B8R5S31 /B4W7
/B22W10 G8/ D4/B8R4 M14W5/B14R7W5 D4W8/R16 G7W2/S23 D4/R6 G22W6/R6 D4W3/R4W8 M22W3/D1W12
/B12R11 D4/R7W6 W2/R38T16W8 G20W2/B8T7W13 G13M22W5/D2W2 W3/B6R4W3 W2/B8W6 /B10R6W1 D15/B4S25 M16W3/R5
D4W4/R4T17 D3W6/ D2W5/ G10L29W6/ D13W6/ G10M30/B20W2 G18W5/W6 D40M35/R10 D3/R12 D2/W7
D7W7/R5 M22W8/W4 D14W4/ W4/B10R7 /B22R16T18W1 G15/ M20W3/W2 /B8W2 /B14 D8W2/R6
D5W4/B8 W2/B11W6 D12W1/R6 G20L28W1/T20 /B16 W2/R11 M12W1/D2 /B8R8 W3/R20S25 L30/
G8W2/ D4W3/W4 D10W4/W5 M14/W2 D2W6/ /B7 G10/D1 G8/W4 D2W2/R7 W3/B12R22T16W2
M18/B8R27 D9/S22W1 W3/W4 D6W23/R6 D40M15L54/W2 G32M43L34W4/W9 D5W2/R16W4 W4/B12R14T11W2 G18W4/ D8W3/
/R12W1 D5W6/B15 W6/R8S32 W3/B12T12W3 W6/B16T14 /R42S24W7 G24M27L28W2/W17 G15/W4 /B12R6 G7/W4
G17W2/W4 W4/ G8W2/W2 G36/ D5L45W5/W13 D10G8L146W12/W2 W2/B8R15 W6/B15R18 M25W2/R11W5 M52/B7S103
D5/R8T12 D3W3/R20 D7/B8W1 W7/B32R2 L44/R12T14`;

const SWING1A = [
  [9, 239, 975, 1055, '#ff00ff'], [9, 239, 1055, 1061, '#ff0000'], [239, 377, 951, 960, '#a3d1a3'],
  [239, 377, 960, 975, '#b3b3ff'], [377, 768, 975, 1012, '#ff66ff'], [377, 768, 1012, 1016, '#ff6060'],
  [768, 1113, 927, 937, '#66b266'], [768, 1113, 937, 975, '#6666ff'], [1113, 1274, 975, 990, '#ffb8b8'],
  [1113, 1274, 990, 992, '#ff99ff'], [1274, 1481, 964, 974, '#c8e6c8'], [1481, 1596, 975, 990, '#ffb3ff'],
  [1481, 1596, 990, 1002, '#ffa8a8'], [1596, 1665, 961, 975, '#b8b8ff'], [1665, 1734, 975, 982, '#d4ecd4'],
  [1826, 1849, 975, 988, '#ffb3ff'], [1849, 1987, 917, 932, '#47a347'], [1849, 1987, 932, 975, '#4d4dff'],
  [1987, 2033, 975, 990, '#ffb8b8'], [2033, 2079, 966, 975, '#c0c0ff'], [2079, 2217, 975, 1023, '#ff33ff'],
  [2079, 2217, 1023, 1029, '#ff3333'], [2217, 2401, 931, 938, '#66b266'], [2217, 2401, 938, 975, '#6666ff'],
  [2401, 2493, 975, 1006, '#7373ff'], [2401, 2493, 1006, 1021, '#66b266'], [2516, 2654, 975, 1004, '#ff66ff'],
  [2516, 2654, 1004, 1008, '#ff6060'],
];

const SWING1B = [
  [9, 768, 1353, 1451, '#ff22ff'], [9, 768, 1451, 1453.5, '#ff3030'], [768, 1113, 1305, 1314, '#a8d0a8'],
  [768, 1113, 1314, 1352, '#9999ff'], [1113, 1274, 1352, 1368, '#ffcccc'], [1113, 1274, 1368, 1371, '#ffb0ff'],
  [1274, 2516, 1267, 1297, '#69b469'], [1274, 2516, 1297, 1352, '#7777ff'], [2516, 2654, 1352, 1381, '#ffa8ff'],
  [2516, 2654, 1381, 1384, '#ffb3b3'],
];

/* ---------- chart 2 data ---------- */

const D = frame(1920, 200, 1.6333, 1.8447);
const E = frame(1920, 1240, 1.6, 1.7062);

const VOLBARS = rows(`
916 916 1120 1175 18 r r5.5 s1120
990 1084 1138 1138 9 r r5 s1083
970 1083 1101 1157 18 r r9.5 s1027
990 1027 1083 1175 20 g r7 s1101
970 1027 1064 1175 17 g r9 g1120
1045 1064 1175 1230 9 r r9 s1193
1156 1156 1322 1375 21 r r6 s1283
1101 1156 1303 1414 20 g g5.5 s1395
1138 1175 1285 1340 11 r r7 g1302
1120 1175 1267 1285 11 g r7 g1157
1064 1120 1193 1322 15 g r9 g1120
1045 1083 1138 1193 17 g g6 g1138
770 806 1101 1101 30 g g1.2 g1027
750 825 898 953 18 r g8 s806
770 880 1157 1210 29 r r5.5 g788
935 990 1120 1120 11 g g7 g953
1009 1009 1138 1157 11 r r6 s1120
843 898 1064 1064 11 g g7.5 g916
880 916 1009 1064 9 r r7 g1009
806 843 972 972 15 g g9 g843
806 862 880 953 12 g r6 g843
862 880 1009 1045 11 r r7 s916
750 806 972 972 13 g g4.5 g825
770 843 935 990 15 r g8 s972
825 916 1027 1083 23 r r3.5 g862
880 935 1009 1027 12 g r9 s990
475 530 953 972 30 g g0 g751
475 548 641 697 21 r r4.5 s548
530 622 659 659 16 r g9 g550
585 622 697 733 15 r r4.5 s677
659 659 953 1009 18 r r2 s733
697 751 935 953 20 g g5 g880
659 714 788 788 10 g g9.5 g696
659 714 733 806 9 g r9 g714
548 603 733 733 11 g g8 g586
457 512 623 623 17 g g1.5 g458
240 290 530 605 27 g g0 g383
290 310 548 586 14 r g8.5 g550
493 493 586 641 9 r r7 s623
512 567 677 735 18 r r3 s604
385 402 659 697 9 g g7.5 g568
420 457 605 641 16 r r0 s641
438 493 586 641 7 r g9 g458
530 567 697 733 23 r r5 g550
641 641 788 825 12 r g8 s806
714 751 770 880 14 r g9 g751
733 770 788 788 5 g g9 s788
`);

const CIRCLES_D = [
  ['c', 1035, 236, 73, 0.7], ['c', 753, 475, 21, 0.22], ['c', 753, 751, 33, 0.35], ['c', 753, 862, 18.5, 0.25],
  ['m', 753, 880, 17.5, 0.25], ['c', 555, 843, 16, 0.25], ['m', 611, 916, 15, 0.22], ['c', 639, 916, 14, 0.2],
  ['m', 18, 1119, 23, 0.3], ['m', 103, 1156, 14, 0.22], ['m', 301, 1211, 17.5, 0.22], ['c', 329, 1027, 18, 0.25],
  ['m', 724, 1027, 14, 0.22], ['m', 837, 678, 21, 0.28], ['c', 894, 806, 18, 0.28], ['m', 894, 954, 14, 0.22],
  ['c', 1006, 457, 27.5, 0.35], ['c', 1063, 530, 16, 0.22], ['m', 1176, 641, 64, 0.62], ['c', 1289, 733, 27, 0.38],
];

const THIN_D = [
  [10, 898], [188, 1377], [357, 751], [413, 1211], [442, 935], [470, 1156], [555, 806], [611, 1045], [640, 751],
  [696, 1083], [753, 475], [866, 1009], [1035, 236], [1119, 733], [1148, 385], [1261, 825],
];

const VOL2 = rows(`
323 297 c7
327 310 c7
334 321 c8.5
364 313 f8.5 67 c7
332 323 f9
330 328 c7.5
254 251 c7
300 188 f7 - c6
359 292 c8.5 73 f7
356 353 c8.5 77
352 329 f8.5 80 c7
356 334 f7 77
259 237 f4.5
344 242 c8.5 91 f4
309 293 c6
352 295 f7.5 81 c6
378 350 c8 51 f7
351 0 f8.5 82
351 0 c8.5 82
318 309 f8
372 311 c8.5 58
331 0 c6
390 317 f8.5 37 c5
376 358 c8.5 53 f7
311 309 c4.5
343 286 c8.5 92 c5
160 0 f0
305 134 c6 - f0
361 303 c8 70 c5
317 314 c5.5
250 0 c3.5
163 0 c8.5 - c3
317 161 f5 - f4
358 310 c8.5 75 f5
366 356 f8.5 65
317 0 f4.5
175 0 f0
86 0 f0
110 76 f1
307 102 c6 - f0
290 277 c8
197 0 c3
181 0 c3.5
349 142 c7.5 85 c3
337 0 c7 99
276 0 c8
283 0 c8
`);

const DELTA2 = `
D3/B8S28W4 W3/B8T11 M19/R16W8 D24W3/R18S17 G5M7W6/R11W2 W3/R5W4 W7/R16T13W12 G7M14W5/W17 /B7R5W5 /B4W6
G12M7/B4S20 G13L20W1/R8T7 G27M46/W14 D22W3/R17W4 D3W28/B16R4W8 G10M10W1/D3 /B20 G7W6/ /B10W5 G18L20W2/R5T9
M9/B22R8W1 /B10S18W5 D12L18W2/ M12W8/W4 W15/R30T12W2 G6M11W2/R5S14W6 D54M38L62W5/W6 W15/R32W2 G14W8/B9W2 W6/R16S24W7
/R35T24W8 G24M18L2/W28 G12W2/B4 W4/B4R2W7 G14W4/W2 G34L32W4/W2 G16M18L84/W7 G8L17W3/R6T12W8 /B8R5W3 W3/B14R26W4
G10M8W2/W2 G8W2/S73 M12/ G4M7W9/R18W2 D5W5/B24 L31/R17T8 W1/`;

const SWING2A = [
  [10, 197, 962, 990, '#ff66ff'], [10, 197, 990, 995, '#ff7070'], [197, 363, 931, 938, '#8cc38c'],
  [197, 363, 938, 962, '#8080ff'], [363, 418, 962, 967, '#ffd0e8'], [418, 446, 953, 962, '#cfe8cf'],
  [446, 473, 962, 970, '#ffd0ff'], [473, 556, 955, 962, '#d0ead0'], [556, 612, 962, 974, '#ffb3ff'],
  [556, 612, 974, 979, '#ffa8a8'], [612, 639, 951, 962, '#b8b8ff'], [639, 695, 962, 973, '#ffb3ff'],
  [695, 750, 910, 922, '#33993c'], [695, 750, 922, 962, '#2a2aff'], [750, 861, 962, 1000, '#ff33ff'],
  [750, 861, 1000, 1007, '#ff3333'], [861, 1027, 880, 903, '#008000'], [861, 1027, 903, 962, '#0000ff'],
  [1027, 1110, 962, 979, '#ff99ff'], [1110, 1138, 956, 962, '#ccccff'], [1138, 1304, 962, 988, '#ff80ff'],
  [1138, 1304, 988, 990, '#ff8080'],
];

const SWING2B = [
  [10, 197, 1343, 1450, '#ff44ff'], [197, 750, 1255, 1283, '#66b366'], [197, 750, 1283, 1343, '#7373ff'],
  [750, 861, 1343, 1390, '#ff88ff'], [750, 861, 1390, 1398, '#ff8a8a'], [861, 1027, 1238, 1266, '#55a855'],
  [861, 1027, 1266, 1343, '#5050ff'], [1027, 1304, 1343, 1383, '#ff99ff'], [1027, 1304, 1383, 1389, '#ff9c9c'],
];

/* ---------- chart 3 data ---------- */

const F = frame(2880, 200, 1.6367, 1.8233);
const G = frame(2880, 1240, 1.6367, 1.7062);

const HUNDRED = rows(`
1020 0 0 1260 0 g g0
998 1180 1226 1249 27 r r7
1224 1270 1429 1429 27 r r4.5
1382 1406 1429 1497 27 g r7.5
1360 1360 1406 1542 27 g g8.5
1157 1338 1361 1361 27 g g7
1180 1270 1338 1452 27 g r3.5
1110 1247 1294 1429 27 g r8
1089 1089 1271 1271 27 g g4.5
998 0 0 1138 0 g g0
998 1066 1089 1136 27 g g5
750 750 1067 1158 27 g g0
727 750 818 842 27 r g7.5
771 796 818 978 27 g g8.5
750 818 863 886 27 r g6.5
795 885 1203 1203 27 r r0
954 954 1180 1293 27 g g8
885 931 954 1226 27 g r8
840 908 933 1112 27 r r5.5
795 818 909 954 27 g g8.5
795 818 841 977 27 r r3
841 841 932 1090 27 r r7
727 796 933 933 27 g g1.5
750 796 863 1022 27 r g6.5
818 863 1067 1067 27 r r4
976 1021 1067 1136 27 g r3.5
863 863 1000 1067 27 g g7.5
727 727 863 887 27 g g2.5
547 547 729 729 27 g g0
390 411 548 571 27 g g0
388 411 479 501 27 r r9
388 479 592 592 27 r r5
457 457 592 660 27 g r8
457 457 569 660 27 r r4
569 569 638 705 27 r r1
636 636 910 910 27 r r0
885 908 932 1045 27 r r1.5
773 773 932 976 27 g g4
614 636 773 796 27 g g1.5
480 524 660 796 27 g g8.5
366 366 502 571 27 g g0
366 366 457 547 27 r g5.5
184 184 434 480 27 g g0
95 184 366 366 27 r g3
343 366 547 547 27 r g4.5
457 479 547 593 27 g r1.5
433 457 479 705 27 g r7
275 433 571 571 27 r r0
343 457 571 592 27 g g5.5
457 457 614 614 27 r r6
592 614 863 863 27 r r2.5
682 705 863 886 27 g g5.5
`);

const VOL3 = rows(`
361 353 f9 79
335 330 f8.5
321 319 c7
257 0 c7
211 0 c7.5
359 195 c9 81 f7
356 346 c8.5 85
353 335 f9 87 c7
368 341 f8.5 71
360 348 f8.5 80
297 295 f7
245 0 f4.5
260 244 f5.5
374 254 f8.5 65 f5
348 346 f8.5 94
318 308 c6.5
357 301 f7 84 c5
368 351 c8.5 71
368 357 c8.5 71
318 0 f7.5
381 316 c9 55 f5
330 0 c8
375 324 f8.5 63 f6
399 363 f9.5 36
347 0 c7 94
292 0 c6
375 292 f8 63 c6
300 0 f5.5
226 0 f1.5
199 179 f0
181 140 f2 - f0
289 171 c7.5 - f0
370 281 f7.5 68 c6
362 360 c8.5 77
322 0 c6
306 300 c5
251 238 c5
202 0 c6.5
317 167 f5
371 317 f7.5 67 f5
367 0 f7 72
307 305 f5.5
238 0 f2
160 156 f0
120 82 f1
300 103 c7.5 - f0
294 0 c7.5
223 0 c3.5
175 149 c6.5 - c2
370 163 c7.5 69
359 344 c7 81
290 283 c8
`);

const DELTA3 = `
D30W2/R16W6 M20W12/B16R4 W10/R35W5 D4W11/R16T10W18 D9W4/R8T4W18 M34W17/B6 W5/B12W13 G18W16/R8T10S34 G20/W5 G33L35/B12
M50W2/W11 G22M31W2/W21 D28W17/R14W7 G10M15/R7W17 G10M16W12/W6 /B20R25T20W10 G11M12/B4W18 W9/B12W18 W4/B10R10W11 G33L31W1/T25
M14/B38R14W7 /B23S30W9 G30L28W5/W2 G6M16W4/W10 D8W9/R33 W3/R48W16 D10W7/R4S29 G22W14/W3 D17G40M36L67/W3 D18M30L42/W10
G17/R11 M5W5/B6R16 G15/R3T16W23 W6/B18R16 W2/B6T24S40W8 /B16R40T20W2 D5/R16T18W5 D8G32L8/R8T14W27 M72/B8W4 D14W2/W23
G58/W1 D8L55W6/W17 G16M36W2/B2 L146W4/B10T18 G12L34W18/R3T14 W6/B20R27W3 M17/R33W10 D15/ D12M42W5/S128W3 W21/B10R12W4
/B46R9 L54/B14R16T15`;

const SWING3A = [
  [72, 150, 971, 1002, '#ff80ff'], [72, 150, 1002, 1007, '#ff7070'], [150, 385, 936, 943, '#8cc38c'],
  [150, 385, 943, 971, '#8c8cff'], [385, 490, 971, 977, '#ffccff'], [490, 673, 967, 971, '#ffccff'],
  [673, 725, 971, 976, '#ffcccc'], [725, 856, 916, 930, '#47a347'], [725, 856, 930, 971, '#5555ff'],
  [856, 1039, 971, 1021, '#ff33ff'], [856, 1039, 1021, 1027, '#ff3c3c'], [1039, 1196, 889, 908, '#008000'],
  [1039, 1196, 908, 971, '#1a1aff'], [1196, 1432, 971, 993, '#ff99ff'], [1196, 1432, 993, 996, '#ffa0a0'],
];

const SWING3B = [
  [72, 150, 1352, 1394, '#ffa8ff'], [72, 150, 1394, 1401, '#ffa0a0'], [150, 856, 1247, 1279, '#69b469'],
  [150, 856, 1279, 1352, '#7777ff'], [856, 1039, 1352, 1417, '#ff88ff'], [856, 1039, 1417, 1425, '#ff8a8a'],
  [1039, 1196, 1244, 1271, '#69b469'], [1039, 1196, 1271, 1352, '#7070ff'], [1196, 1432, 1352, 1382, '#ffb3ff'],
];

/* ---------- charts ---------- */

const SecondsChart = () => (
  <Chart>
    <PaneRow $height={1286}>
      <Plot x={0} y={17} w={1703} h={1286} sep={1294.5} axisTop={25}>
        <Profile />
        <Bands at={A} items={BANDS_A} />
        <Bands at={B} items={BANDS_B} />
        <Lines
          at={A}
          items={[
            [0, 2082, 148, '#ff0000', 2.2], [0, 2082, 175.5, '#065006', 2], [1156, 1340, 865, '#007000'],
            [786, 950, 975, '#b00000'], [300, 786, 1085, '#ff0000', 1.8, '7 3'], [1351, 2065, 479, '#008000', 1.3, '7 3'],
          ]}
        />
        <Lines
          at={B}
          items={[
            [907, 1180, 512, '#008000', 1.6, '7 3'], [1220, 1316, 374, '#008000'], [1219, 1245, 540, '#008000'],
            [960, 1070, 705, '#ff0000', 2], [868, 892, 705, '#008000'],
            [1504, 1862, 843, '#777', 2, '9 4'],
          ]}
        />
        <Candles at={A} data={EARLY} first={22.5} step={24.65} />
        <Candles at={B} data={LATE} first={8.5} step={27.24} />
        <Circles at={A} items={CIRCLES_A} />
        <Circles at={B} items={CIRCLES_B} />
        <Zigzag at={A} w={2.2} points={[[-2, 170], [811, 1362], [1181, 425], [1353.5, 1113]]} />
        <Zigzag at={A} w={1} points={[[-2, 180], [244, 1278], [393, 617], [811, 1362]]} />
        <Zigzag at={B} w={2.2} points={[[-154.7, 1505], [1316, 263], [1452, 955]]} />
        <Zigzag at={B} w={1} points={THIN_B} />
        <Marks at={A} data={EARLY} first={22.5} step={24.65} w={10} h={14} />
        <Marks at={B} data={LATE} first={8.5} step={27.24} w={11} h={14} />
        <Arrows
          at={A}
          items={[
            ['d', 441, 770], ['d', 639, 825], ['d', 786, 963], ['d', 959, 1155], ['d', 1132, 714], ['d', 1255, 466],
            ['u', 294, 1073], ['u', 1008, 1127], ['u', 1353, 1155], ['d', 47, 162, '#00ffff'],
          ]}
        />
        <Arrows
          at={B}
          items={[['d', 1289, 388], ['u', 335, 1050], ['u', 907, 829], ['u', 1207, 637], ['u', 1071, 966, '#00ffff']]}
        />
        <Crosses at={A} items={[[762, 684, '#ff0000'], [639, 1130, '#008000'], [737, 1130, '#008000']]} />
        <Crosses at={B} items={[[417, 1246, '#008000']]} />
        <Words
          at={A}
          items={[
            ['P', 22, 439, '#008000'], ['A', 294, 1184, '#e00000'], ['P', 786, 796, '#e00000'], ['P', 1156, 1018, '#008000'],
            ['A', 1353, 464, '#008000'], ['NOE', -3, 52, '#fff', 12.6], ['NOE', 811, 1485, '#fff', 12.6],
          ]}
        />
        <Words
          at={B}
          items={[['A', 907, 496, '#008000'], ['P', 962, 607, '#e00000'], ['P', 1234, 583, '#008000'], ['P', 1316, 583, '#008000']]}
        />
        <Tags at={A} items={[['VDD', 984, 852, 30, 16, 13], ['VDD', 97, 989, 29, 15, 13, true]]} />
        <Tags
          at={B}
          items={[
            ['VDD', 254, 803, 30, 16, 13], ['VDD', 1180, 306, 30, 17, 13], ['DD', 526, 1381, 20, 15, 13, true],
            ['VD', 1397, 912, 19, 15, 13, true], ['VD', 1452, 1105, 19, 15, 13, true],
          ]}
        />
      </Plot>
      <PriceScale>
        {priceList(14713.25, 1.5, 14).map((p, i) => (
          <Price key={p} $step={92.94} $offset={i ? 0 : 23}>
            {p}
          </Price>
        ))}
        {BLOCKS.map(([y1, y2, c]) => (
          <PriceBlock key={y1} $top={y1 - 17} $height={y2 - y1} $color={c} />
        ))}
        <LastPrice $top={589}>14704.75</LastPrice>
      </PriceScale>
      <Brand $left={1}>VolSys®</Brand>
    </PaneRow>
    <IndicatorPane x={0} w={1703} top={1303} bottom={1500} name="Volume (4)" scale={['332', '166', '0']}>
      <Volume at={C} data={VOL1} first={21.2} step={23.005} base={391.5} />
    </IndicatorPane>
    <IndicatorPane x={0} w={1703} top={1500} bottom={1724} name="Delta Filters (1,5,10,20)" scale={['161', '54', '-54', '-161']}>
      <Delta at={C} series={DELTA1} first={21.2} step={23.005} zero={602} width={7} />
    </IndicatorPane>
    <IndicatorPane x={0} w={1703} top={1724} bottom={1923} name="VolSwing" scale={['479', '0', '-479']}>
      <Swing
        at={C}
        bars={SWING1A}
        step={23}
        first={0}
        right={1701}
        levels={[[951, '#b8b8b8'], [998]]}
        outline={[
          '-2,795 9,795 9,1155',
          '9,1130 239,1130 239,919 377,919 377,1120 768,1120 768,831 1113,831 1113,1033 1274,1033 1274,914 1481,914 1481,1002 1596,1002 1596,961 1665,961 1665,988 1734,988 1734,957 1826,957 1826,988 1849,988 1849,886 1987,886 1987,1000 2033,1000 2033,964 2079,964 2079,1043 2217,1043 2217,915 2401,915 2401,1060 2494,1060 2494,960 2516,960 2516,1053 2644,1053',
          '1274,973 1481,973',
          '1734,973 1826,973',
          '2494,973 2516,973',
        ]}
      />
    </IndicatorPane>
    <IndicatorPane x={0} w={1703} top={1923} bottom={2144} last name="VolSwing" scale={['572', '191', '-191', '-572']}>
      <Swing
        at={C}
        bars={SWING1B}
        step={23}
        first={0}
        right={1701}
        levels={[[1305.5], [1397.5]]}
        outline={['9,1140 9,1482 768,1482 768,1299 1113,1299 1113,1373 1274,1373 1274,1171 2516,1171 2516,1381 2644,1381']}
      />
    </IndicatorPane>
    <Times
      start={12}
      step={52.8}
      labels="08 08 08 08 09 09 09 09 10 10 10 10 11 11 11 12 12 12 12 13 13 13 13 14 14 14 14 15 15"
    />
  </Chart>
);

const VolBarsChart = () => (
  <Chart>
    <PaneRow $height={1253}>
      <Plot x={1926} y={21} w={888} h={1253} sep={1266} axisTop={29}>
        <Bands at={D} items={[[1020, 236, 1346, 494, 'w'], [1133, 402, 1234, 641, 'w']]} />
        <Lines at={D} items={[[1343, 1458, 770, '#707070', 3, '7 2']]} />
        <Candles at={D} data={VOLBARS} first={18.5} step={28.22} />
        <Tags
          at={D}
          items={[['VDD', 300.5, 1017, 53, 29, 25], ['VDD', 639.5, 705, 53, 29, 25], ['VDD', 1006, 410, 53, 29, 25]]}
        />
        <Circles at={D} items={CIRCLES_D} />
        <Zigzag at={D} w={2.2} points={[[10, 1032], [188, 1377], [753, 475], [866, 1009], [1035, 236], [1261, 806]]} />
        <Zigzag at={D} w={1} points={THIN_D} />
        <Marks at={D} data={VOLBARS} first={18.5} step={28.22} w={14} h={9} />
        <Arrows at={D} items={[['u', 329, 1261, '#00ffff']]} />
        <Crosses at={D} items={[[103, 1213, '#008000', 8], [130, 1213, '#008000', 8]]} />
        <Words
          at={D}
          items={[['NOE', 188, 1463, '#fff', 12.6], ['NOE', 753, 388, '#fff', 12.6], ['NOE', 1035, 150, '#fff', 12.6]]}
        />
      </Plot>
      <PriceScale>
        {priceList(14717.75, 2.25, 14).map((p, i) => (
          <Price key={p} $step={89.75} $offset={i ? 0 : 33.2}>
            {p}
          </Price>
        ))}
        <LastPrice $top={588}>14704.75</LastPrice>
      </PriceScale>
    </PaneRow>
    <IndicatorPane x={1926} w={888} top={1274} bottom={1496} scale={['410', '273', '137', '0']}>
      <Volume at={E} data={VOL2} first={18} step={27.66} base={424} />
    </IndicatorPane>
    <IndicatorPane x={1926} w={888} top={1496} bottom={1707} name="(1,5,10,20)" indent scale={['207', '0', '-207']}>
      <Delta at={E} series={DELTA2} first={18} step={27.66} zero={617} width={9} />
    </IndicatorPane>
    <IndicatorPane x={1926} w={888} top={1707} bottom={1902} scale={['557', '0', '-557']}>
      <Swing
        at={E}
        bars={SWING2A}
        step={27.66}
        first={9}
        right={2812}
        levels={[[943], [982]]}
        outline={[
          '9,1076 197,1076 197,856 363,856 363,1020 418,1020 418,953 446,953 446,970 473,970 473,931 556,931 556,985 612,985 612,951 639,951 639,1003 695,1003 695,900 750,900 750,1043 861,1043 861,870 1027,870 1027,1001 1110,1001 1110,955 1138,955 1138,1025 1290,1025',
        ]}
      />
    </IndicatorPane>
    <IndicatorPane x={1926} w={888} top={1902} bottom={2145} last scale={['574', '191', '-191', '-574']}>
      <Swing
        at={E}
        bars={SWING2B}
        step={27.66}
        first={9}
        right={2812}
        levels={[[1293.5], [1391, '#b0b0b0']]}
        outline={['9,1521 197,1521 197,1150 750,1150 750,1387 861,1387 861,1291 1027,1291 1027,1403 1290,1403']}
      />
    </IndicatorPane>
    <Times start={5} step={51.87} labels="09 09 10 10 10 11 12 12 13 13 14 14 14 15 15 15" />
  </Chart>
);

const VolumeChart = () => (
  <Chart>
    <PaneRow $height={1256}>
      <Plot x={2916} y={21} w={896} h={1256} sep={1269} axisTop={29}>
        <Bands at={F} items={[[1170, 95, 1446, 411, 'w'], [1301, 298, 1367, 592, 'w']]} />
        <Lines
          at={F}
          items={[
            [58, 830, 524.5, '#008000', 2, '5 2'], [293, 1446, 1384, '#ff0000', 2, '6 3'], [136, 281, 1180, '#e00000', 2],
            [1000, 1117, 479, '#e00000', 2], [1391, 1446, 502, '#e00000', 2.4], [687, 780, 841, '#c00000', 1.5, '5 3'],
            [72, 98, 1180, '#008000', 1.6], [308, 333, 1089, '#008000', 1.6], [1443, 1517, 705, '#707070', 3, '7 2'],
          ]}
        />
        <Candles at={F} data={HUNDRED} first={85} step={26.15} />
        <Tags
          at={F}
          items={[['DD', 268, 1048, 36, 29, 25], ['DD', 661, 663, 36, 29, 25], ['VDD', 1131, 302, 53, 29, 25]]}
        />
        <Zigzag at={F} w={2.2} points={[[58, 1207], [138, 1429], [844, 388], [1027, 1045], [1184, 184], [1394, 863]]} />
        <Zigzag at={F} w={1} points={[[138, 1429], [373, 727], [477, 1203], [661, 727], [713, 1067], [844, 388]]} />
        <Words
          at={F}
          items={[
            ['P', 138, 1056, '#e00000'], ['A', 294, 1416, '#e00000'], ['A', 687, 942, '#e00000'], ['P', 1000, 468, '#e00000'],
            ['P', 1392, 446, '#e00000'], ['NOE', 138, 1532, '#fff', 12.6], ['NOE', 1184, 82, '#fff', 12.6],
          ]}
        />
        <Arrows
          at={F}
          items={[
            ['d', 85, 1024], ['d', 138, 1160], ['d', 1000, 482], ['d', 1000, 686], ['u', 85, 1245], ['u', 216, 1381],
            ['u', 242, 1494], ['d', 974, 460, '#00ffff'],
          ]}
        />
        <Crosses at={F} items={[[111, 946, '#ff0000', 8], [608, 742, '#ff0000', 8], [1419, 939, '#008000', 8]]} />
      </Plot>
      <PriceScale>
        {priceList(14715.75, 1.75, 15).map((p, i) => (
          <Price key={p} $step={86.8} $offset={i ? 0 : -10.6}>
            {p}
          </Price>
        ))}
        <LastPrice $top={558}>14704.75</LastPrice>
      </PriceScale>
      <Brand $left={2}>VolSys®</Brand>
    </PaneRow>
    <IndicatorPane x={2916} w={896} top={1277} bottom={1501} name="Volume (7)" scale={['410', '273', '137', '0']}>
      <Volume at={G} data={VOL3} first={85} step={26.15} base={431} />
    </IndicatorPane>
    <IndicatorPane x={2916} w={896} top={1501} bottom={1712} name="Delta Filters (1,5,10,20)" scale={['118', '0', '-118']}>
      <Delta at={G} series={DELTA3} first={85} step={26.15} zero={624} width={8} />
    </IndicatorPane>
    <IndicatorPane x={2916} w={896} top={1712} bottom={1907} name="VolSwing" scale={['448', '0', '-448']}>
      <Swing
        at={G}
        bars={SWING3A}
        step={26.15}
        first={58}
        right={3811}
        levels={[[947], [994]]}
        outline={[
          '58,1101 150,1101 150,823 385,823 385,1036 490,1036 490,856 673,856 673,1003 725,1003 725,890 856,890 856,1085 1039,1085 1039,873 1196,873 1196,1117 1420,1117',
        ]}
      />
    </IndicatorPane>
    <IndicatorPane x={2916} w={896} top={1907} bottom={2150} last name="VolSwing" scale={['448', '149', '-149', '-448']}>
      <Swing
        at={G}
        bars={SWING3B}
        step={26.15}
        first={58}
        right={3811}
        levels={[[1289], [1414]]}
        outline={['58,1409 150,1409 150,1159 856,1159 856,1402 1039,1402 1039,1309 1196,1309 1196,1416 1420,1416']}
      />
    </IndicatorPane>
    <Times start={16} step={47.9} labels="09 10 10 10 11 11 12 12 12 13 13 14 14 14 15 15 15 15" />
  </Chart>
);

const Strip = styled.div`
  position: absolute;
  left: 0;
  right: 0;
  bottom: 0;
  height: 3px;
  background: #12394b;
`;

function App() {
  return (
    <>
      <GlobalStyle />
      <Workspace>
        <Window $width={1926} $top={1}>
          <Bar $height={16}>
            <Logo />
            <Instrument>NQ 12-2021</Instrument>
            4 Second
            <Buttons />
          </Bar>
          <Body>
            <SecondsChart />
            <OrderPanel />
          </Body>
        </Window>
        <Window $width={962} $top={4} $gap={28}>
          <Bar $height={17}>
            <Instrument $width={25}>2021</Instrument>
            8|4 VolBars
            <Buttons />
          </Bar>
          <Body>
            <VolBarsChart />
          </Body>
        </Window>
        <Window $width={970} $top={4}>
          <Bar $height={17}>
            <Logo />
            <Instrument>NQ 12-2021</Instrument>
            100 Volume
            <Buttons />
          </Bar>
          <Body>
            <VolumeChart />
          </Body>
        </Window>
        <TrendTable />
        <Ratio $left={1256} $top={44}>SR: 01</Ratio>
        <Ratio $left={2564} $top={47}>BR: 0</Ratio>
        <Ratio $left={3576} $top={47}>VR: 1</Ratio>
        <Strip />
      </Workspace>
    </>
  );
}

export default App;
